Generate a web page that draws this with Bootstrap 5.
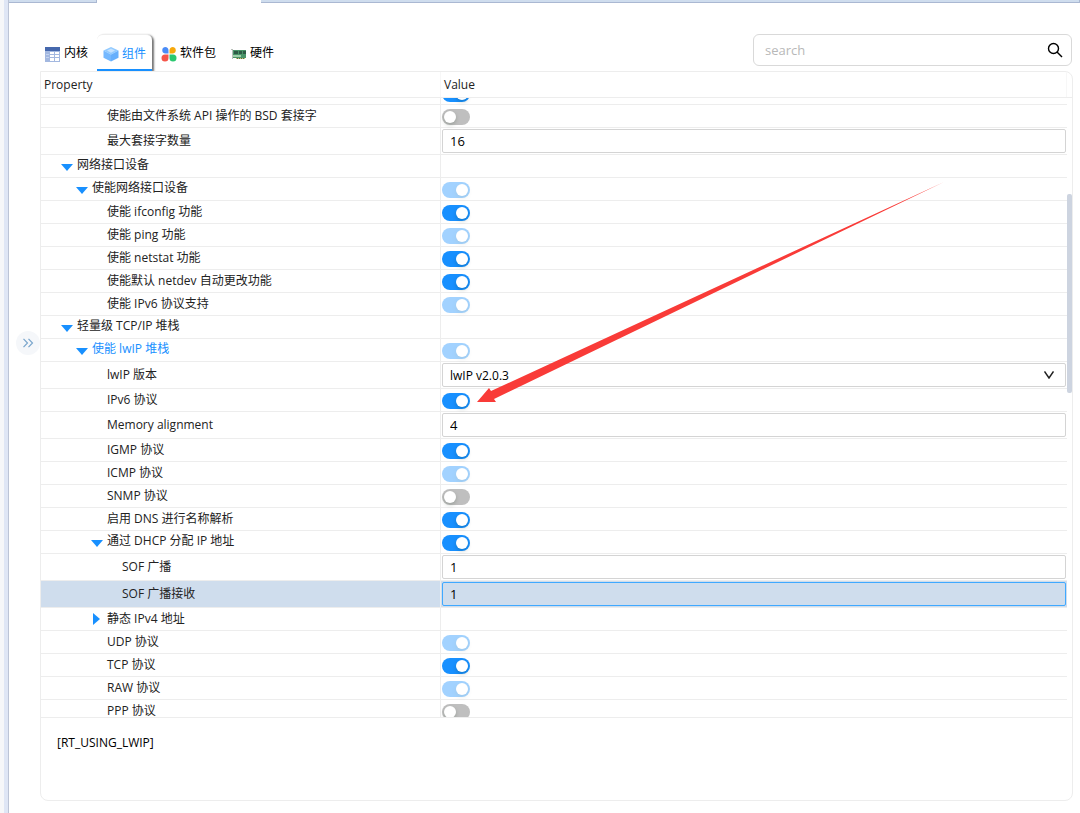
<!DOCTYPE html>
<html lang="zh-CN">
<head>
<meta charset="utf-8">
<meta name="viewport" content="width=device-width, initial-scale=1">
<title>RT-Thread Settings</title>
<link href="https://cdn.jsdelivr.net/npm/bootstrap@5.3.0/dist/css/bootstrap.min.css" rel="stylesheet">
<style>
:root { --line: #ededed; --blue: #1890ff; }
body { font-family: "Open Sans", "Noto Sans CJK SC", sans-serif; font-size: 12px; line-height: 16px; color: #222; background: #fff; }
.edge { width: 9px; background: #dfe6f5; border-left: 4px solid #f6f7f9; border-right: 1px solid #bcc4d6; }
.strip { height: 3px; }
.strip span { background: #cfddee; border: 1px solid #aab8d2; border-top: 0; border-left: 0; }
.strip .before { width: 88px; }
.strip .current { width: 164px; background: #fff; border: 0; }
.rail { width: 31px; padding-top: 328px; }
.expander { width: 24px; height: 24px; background: #f5f7fa; border-radius: 50%; }
.workspace { padding: 31px 7px 12px 0; }
.toolbar { height: 37px; padding-right: 1px; }
.kind-tabs { gap: 3px; margin-left: -1px; }
.kind-tabs .nav-link { display: flex; align-items: center; gap: 3px; height: 37px; padding: 4px 6px 0; color: #000; border-bottom: 2px solid transparent; border-radius: 0; }
.kind-tabs .nav-link.active { color: var(--blue); background: #fff; border: 1px solid var(--line); border-bottom: 2px solid var(--blue); border-width: 1px 0 2px; border-radius: 6px 6px 0 0; box-shadow: 2px 1px 2px #777; clip-path: inset(-2px -5px 0 -1px); }
.kind-tabs svg { margin-top: 1px; }
.search-box { width: 319px; height: 32px; border: 1px solid #d9d9d9; border-radius: 6px; padding: 0 8px 0 11px; }
.search-box input { font-size: 13px; outline: 0; background: none; }
.search-box input::placeholder { color: #b8b8b8; }
.panel { border: 1px solid var(--line); border-radius: 0 8px 8px 8px; }
.panel-head { height: 26px; border-bottom: 1px solid var(--line); font-size: 12px; font-weight: 500; line-height: 26px; }
.head-name { width: 400px; padding-left: 3px; border-right: 1px solid #f7f7f7; }
.head-value { padding-left: 3px; margin-right: 5px; border-right: 1px solid #f7f7f7; }
.viewport { min-height: 0; padding-right: 5px; border-bottom: 1px solid var(--line); }
.prop-table { --bs-table-bg: transparent; table-layout: fixed; border-collapse: separate; border-spacing: 0; margin: -16px 0 0; }
.prop-table > tbody > tr > * { height: 23px; padding: 0 1px; border-bottom: 1px solid var(--line); font-weight: 400; vertical-align: middle; color: #222; }
.prop-table > tbody > tr > th { border-right: 1px solid var(--line); white-space: nowrap; }
.prop-table > tbody > tr.tall > * { height: 27px; }
.prop-table > tbody > tr.chosen > * { background: #cfdded; }
.prop-table > tbody > tr.active-node > th { color: var(--blue); }
.prop-table .name-col { width: 400px; }
.prop-table > tbody > tr > th.d0 { padding-left: 36px; }
.prop-table > tbody > tr > th.d1 { padding-left: 51px; }
.prop-table > tbody > tr > th.d2 { padding-left: 66px; }
.prop-table > tbody > tr > th.d3 { padding-left: 81px; }
.twisty { width: 16px; height: 12px; margin-left: -16px; display: inline-flex; align-items: center; vertical-align: -2px; }
.twisty::before { content: ""; width: 12px; height: 7px; margin-bottom: 3px; background: var(--blue); clip-path: polygon(0 0, 100% 0, 50% 100%); }
.twisty.closed::before { width: 7px; height: 12px; margin: 0 0 0 2px; clip-path: polygon(0 0, 100% 50%, 0 100%); }
.toggle { appearance: none; display: block; width: 28px; height: 16px; margin: 2px 0 0; padding: 2px; border-radius: 8px; background: #bfbfbf; }
.toggle::before { content: ""; display: block; width: 12px; height: 12px; border-radius: 50%; background: #fff; box-shadow: 0 2px 4px rgba(0, 35, 11, .2); }
.toggle:checked { background: var(--blue); }
.toggle:checked::before { margin-left: 12px; }
.toggle:disabled { opacity: .4; }
.field { display: block; width: 100%; height: 24px; padding: 0 7px; border: 1px solid #d4d4d4; border-radius: 2px; background-color: transparent; color: #000; font-size: 13px; line-height: 22px; outline: 0; }
select.field { appearance: none; padding: 1px 7px 0; font-size: 12px; background: #fff url("data:image/svg+xml,%3Csvg xmlns='http://www.w3.org/2000/svg' width='10' height='8'%3E%3Cpath d='M.5.5 5 7 9.500.5' fill='none' stroke='%23222' stroke-width='1.500'/%3E%3C/svg%3E") no-repeat right 11px center; }
.chosen .field { border-color: #40a9ff; }
.scroll-thumb { top: 96px; right: 0; width: 5px; height: 199px; background: #cdd4e0; border-radius: 2px; }
.pointer-arrow { left: 436px; top: 84px; }
.detail { height: 82px; padding: 17px 16px; color: #000; }
</style>
</head>
<body class="d-flex vh-100 overflow-hidden">
<div class="edge flex-shrink-0"></div>
<div class="d-flex flex-column flex-grow-1">
  <div class="strip d-flex"><span class="before"></span><span class="current"></span><span class="flex-grow-1"></span></div>
  <div class="d-flex flex-grow-1 overflow-hidden">
    <div class="rail flex-shrink-0 d-flex justify-content-end align-items-start">
      <button type="button" class="expander btn p-0 border-0 d-flex align-items-center justify-content-center" aria-label="展开">
        <svg width="12" height="10" viewBox="0 0 12 10" fill="none" stroke="#79a5cc" stroke-width="1.2"><path d="M1.500.8 5.500 5l-4 4.200M6.500.8l4 4.200-4 4.200"/></svg>
      </button>
    </div>
    <main class="workspace d-flex flex-column flex-grow-1">
      <div class="toolbar d-flex justify-content-between align-items-start">
        <nav class="kind-tabs nav">
          <a class="nav-link" href="#kernel"><svg width="16" height="16" viewBox="0 0 16 16"><path fill="#a3b8e0" d="M0 1h15v15H0z"/><path fill="#4668ad" d="M0 1h15v4H0z"/><path fill="#fff" d="M5 6h4v2H5zm5 0h4v2h-4zM5 9h4v2H5zm5 0h4v2h-4zm-5 3h4v3H5zm5 0h4v3h-4z"/><path stroke="#c4d3ef" d="M1 8.500h3M1 11.500h3"/></svg>内核</a>
          <a class="nav-link active" href="#component" aria-current="page"><svg width="16" height="16" viewBox="0 0 16 16"><path fill="#91caff" d="M8 1l7.500 3.500L8 8.500.5 4.500z"/><path fill="#74b8ff" d="M.5 4.500 8 8.500V15.500L.5 11.800z"/><path fill="#66affc" d="M15.500 4.500 8 8.500v7l7.500-3.700z"/><path fill="#c5e2ff" d="M8 2.500l4 2-4 2.200-4-2.200z"/></svg>组件</a>
          <a class="nav-link" href="#package"><svg width="16" height="16" viewBox="0 0 16 16"><path fill="#4a8cf7" d="M4 1a3.500 3.500 0 0 1 3.500 3.500v3H4A3.300 3.300 0 0 1 4 1z"/><path fill="#f7a80b" d="M12 1a3.300 3.300 0 0 1 0 6.500H8.500v-3A3.500 3.500 0 0 1 12 1z"/><path fill="#f5564a" d="M4 8.500h3.500V12A3.500 3.500 0 1 1 4 8.500z"/><path fill="#2ac870" d="M8.500 8.500H12A3.500 3.500 0 1 1 8.500 12z"/></svg>软件包</a>
          <a class="nav-link" href="#hardware"><svg width="16" height="16" viewBox="0 0 16 16"><path fill="#b8bfb8" d="M0 3h2v10H1V4H0z"/><path fill="#4a9468" d="M2 4h13v8H2z"/><path fill="#2f5a45" d="M3 5h4v3H3zm5 0h3v3H8zm4 0h3v3h-3z"/><path fill="#9fcfa8" d="M2 9h8v2H2z"/><path fill="#cfc27a" d="M5 12h9v1H5z"/><path stroke="#52734b" d="M6.500 12v1m2-1v1m2-1v1m2-1v1"/></svg>硬件</a>
        </nav>
        <div class="search-box d-flex align-items-center">
          <input type="search" class="border-0 p-0 flex-grow-1" placeholder="search" aria-label="search">
          <button type="button" class="btn p-0 border-0 d-flex" aria-label="搜索"><svg width="16" height="16" viewBox="0 0 16 16" fill="none" stroke="#000" stroke-width="1.400"><circle cx="6.500" cy="6.500" r="5"/><path d="M10 10l5 5"/></svg></button>
        </div>
      </div>
      <section class="panel d-flex flex-column flex-grow-1 overflow-hidden">
        <div class="panel-head d-flex flex-shrink-0"><div class="head-name">Property</div><div class="head-value flex-grow-1">Value</div></div>
        <div class="viewport position-relative overflow-hidden flex-grow-1">
          <table class="table prop-table">
            <colgroup><col class="name-col"><col></colgroup>
            <tbody>
              <tr><th class="d2" scope="row"></th><td><input class="toggle" type="checkbox" aria-label="BSD" checked></td></tr>
              <tr><th class="d2" scope="row"><label for="p1">使能由文件系统 API 操作的 BSD 套接字</label></th><td><input class="toggle" type="checkbox" id="p1"></td></tr>
              <tr class="tall"><th class="d2" scope="row"><label for="p2">最大套接字数量</label></th><td><input class="field" type="text" id="p2" value="16"></td></tr>
              <tr><th class="d0" scope="row"><button type="button" class="twisty btn p-0 border-0" aria-label="折叠"></button>网络接口设备</th><td></td></tr>
              <tr><th class="d1" scope="row"><button type="button" class="twisty btn p-0 border-0" aria-label="折叠"></button><label for="p4">使能网络接口设备</label></th><td><input class="toggle" type="checkbox" id="p4" checked disabled></td></tr>
              <tr><th class="d2" scope="row"><label for="p5">使能 ifconfig 功能</label></th><td><input class="toggle" type="checkbox" id="p5" checked></td></tr>
              <tr><th class="d2" scope="row"><label for="p6">使能 ping 功能</label></th><td><input class="toggle" type="checkbox" id="p6" checked disabled></td></tr>
              <tr><th class="d2" scope="row"><label for="p7">使能 netstat 功能</label></th><td><input class="toggle" type="checkbox" id="p7" checked></td></tr>
              <tr><th class="d2" scope="row"><label for="p8">使能默认 netdev 自动更改功能</label></th><td><input class="toggle" type="checkbox" id="p8" checked></td></tr>
              <tr><th class="d2" scope="row"><label for="p9">使能 IPv6 协议支持</label></th><td><input class="toggle" type="checkbox" id="p9" checked disabled></td></tr>
              <tr><th class="d0" scope="row"><button type="button" class="twisty btn p-0 border-0" aria-label="折叠"></button>轻量级 TCP/IP 堆栈</th><td></td></tr>
              <tr class="active-node"><th class="d1" scope="row"><button type="button" class="twisty btn p-0 border-0" aria-label="折叠"></button><label for="p11">使能 lwIP 堆栈</label></th><td><input class="toggle" type="checkbox" id="p11" checked disabled></td></tr>
              <tr class="tall"><th class="d2" scope="row"><label for="p12">lwIP 版本</label></th><td><select class="field" id="p12"><option>lwIP v2.0.3</option></select></td></tr>
              <tr><th class="d2" scope="row"><label for="p13">IPv6 协议</label></th><td><input class="toggle" type="checkbox" id="p13" checked></td></tr>
              <tr class="tall"><th class="d2" scope="row"><label for="p14">Memory alignment</label></th><td><input class="field" type="text" id="p14" value="4"></td></tr>
              <tr><th class="d2" scope="row"><label for="p15">IGMP 协议</label></th><td><input class="toggle" type="checkbox" id="p15" checked></td></tr>
              <tr><th class="d2" scope="row"><label for="p16">ICMP 协议</label></th><td><input class="toggle" type="checkbox" id="p16" checked disabled></td></tr>
              <tr><th class="d2" scope="row"><label for="p17">SNMP 协议</label></th><td><input class="toggle" type="checkbox" id="p17"></td></tr>
              <tr><th class="d2" scope="row"><label for="p18">启用 DNS 进行名称解析</label></th><td><input class="toggle" type="checkbox" id="p18" checked></td></tr>
              <tr><th class="d2" scope="row"><button type="button" class="twisty btn p-0 border-0" aria-label="折叠"></button><label for="p19">通过 DHCP 分配 IP 地址</label></th><td><input class="toggle" type="checkbox" id="p19" checked></td></tr>
              <tr class="tall"><th class="d3" scope="row"><label for="p20">SOF 广播</label></th><td><input class="field" type="text" id="p20" value="1"></td></tr>
              <tr class="tall chosen"><th class="d3" scope="row"><label for="p21">SOF 广播接收</label></th><td><input class="field" type="text" id="p21" value="1"></td></tr>
              <tr><th class="d2" scope="row"><button type="button" class="twisty closed btn p-0 border-0" aria-label="展开"></button>静态 IPv4 地址</th><td></td></tr>
              <tr><th class="d2" scope="row"><label for="p23">UDP 协议</label></th><td><input class="toggle" type="checkbox" id="p23" checked disabled></td></tr>
              <tr><th class="d2" scope="row"><label for="p24">TCP 协议</label></th><td><input class="toggle" type="checkbox" id="p24" checked></td></tr>
              <tr><th class="d2" scope="row"><label for="p25">RAW 协议</label></th><td><input class="toggle" type="checkbox" id="p25" checked disabled></td></tr>
              <tr><th class="d2" scope="row"><label for="p26">PPP 协议</label></th><td><input class="toggle" type="checkbox" id="p26"></td></tr>
            </tbody>
          </table>
          <div class="scroll-thumb position-absolute"></div>
          <svg class="pointer-arrow position-absolute pe-none" width="467" height="220" viewBox="0 0 467 220"><path fill="#f93b38" d="M0 220 12 206l2 3L467 0 17 217l2 3z"/></svg>
        </div>
        <div class="detail flex-shrink-0">[RT_USING_LWIP]</div>
      </section>
    </main>
  </div>
</div>
<script src="https://cdn.jsdelivr.net/npm/bootstrap@5.3.0/dist/js/bootstrap.bundle.min.js"></script>
</body>
</html>
